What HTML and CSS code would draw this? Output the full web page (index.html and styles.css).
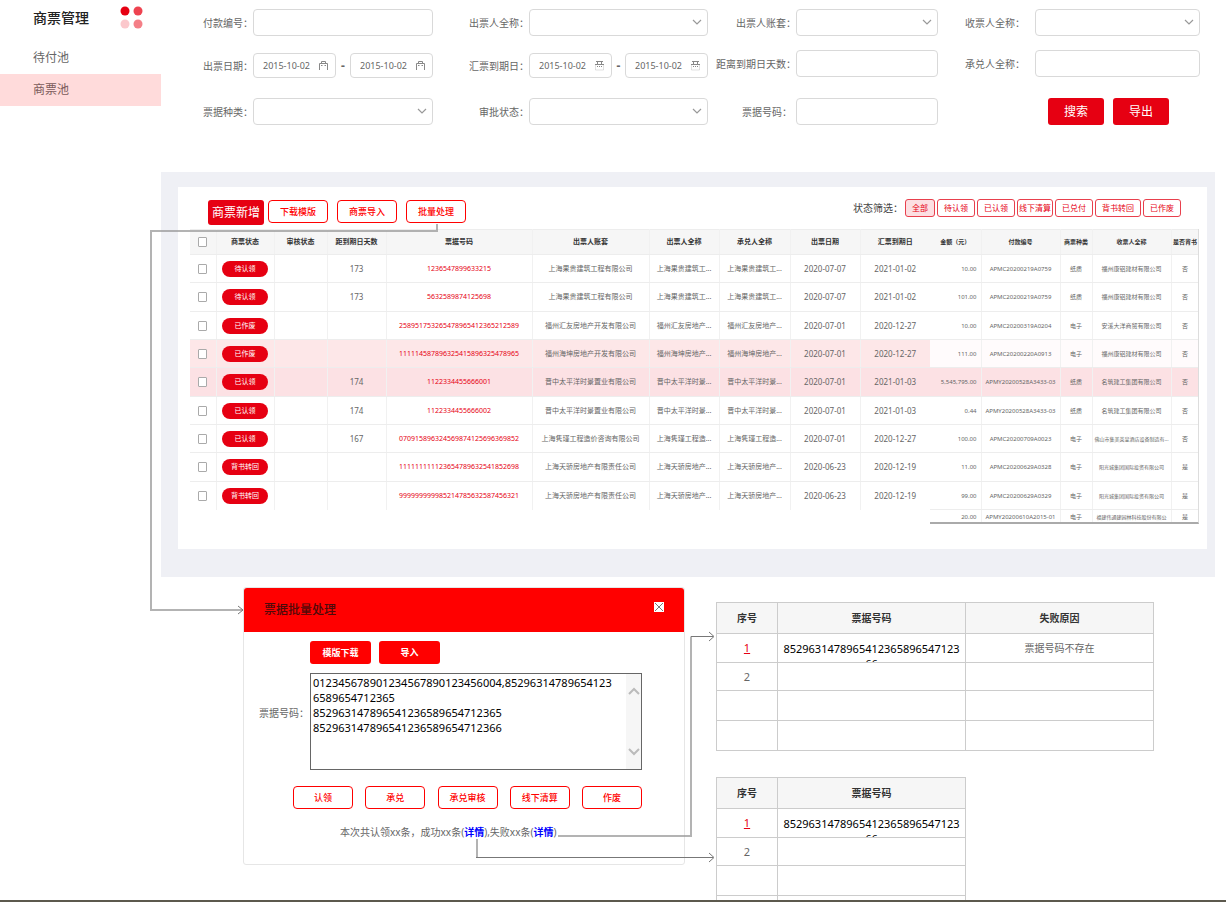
FILE: index.html
```html
<!DOCTYPE html>
<html lang="zh-CN">
<head>
<meta charset="utf-8">
<title>商票管理</title>
<link rel="stylesheet" href="styles.css">
</head>
<body>
<div class="page">
  <div class="top">
    <aside class="sidebar">
      <div class="brand">
        <h1>商票管理</h1>
        <svg class="dots" width="24" height="24" viewBox="0 0 24 24" aria-hidden="true"><circle cx="5" cy="5" r="4.5" fill="#e60012"/><circle cx="18" cy="5" r="4.5" fill="#ee4350"/><circle cx="5" cy="18" r="4.5" fill="#fbc8cc"/><circle cx="18" cy="18" r="4.5" fill="#f47f87"/></svg>
      </div>
      <nav class="nav">
        <a href="#pending">待付池</a>
        <a href="#pool" class="active">商票池</a>
      </nav>
    </aside>
    <form class="search">
      <label for="f1">付款编号：</label>
      <input id="f1" class="box" type="text">
      <label for="f2">出票人全称：</label>
      <div class="pick"><select id="f2" class="box"><option></option></select><svg class="chev" viewBox="0 0 10 6"><path d="M1 1l4 4 4-4"/></svg></div>
      <label for="f3">出票人账套：</label>
      <div class="pick"><select id="f3" class="box"><option></option></select><svg class="chev" viewBox="0 0 10 6"><path d="M1 1l4 4 4-4"/></svg></div>
      <label for="f4" class="wide">收票人全称：</label>
      <div class="pick"><select id="f4" class="box"><option></option></select><svg class="chev" viewBox="0 0 10 6"><path d="M1 1l4 4 4-4"/></svg></div>

      <label for="f5" class="low">出票日期：</label>
      <div class="range">
        <span class="date"><input id="f5" type="text" value="2015-10-02"><svg viewBox="0 0 9 10"><path d="M.5 9V2.500h8V9M2.500 2.500v-2h4v2M2 4.500h1.500M5.500 4.500H7"/></svg></span>
        <b>-</b>
        <span class="date"><input type="text" value="2015-10-02" aria-label="出票日期止"><svg viewBox="0 0 9 10"><path d="M.5 9V2.500h8V9M2.500 2.500v-2h4v2M2 4.500h1.500M5.500 4.500H7"/></svg></span>
      </div>
      <label for="f6" class="low">汇票到期日：</label>
      <div class="range">
        <span class="date"><input id="f6" type="text" value="2015-10-02"><svg viewBox="0 0 9 10"><path d="M1 .5h7M0 3.500h9M2.500 .5v3M6.500 .5v3M2 5.500h1M4 5.500h1M6 5.500h1"/><path d="M.5 4v5h8V4" opacity=".25"/></svg></span>
        <b>-</b>
        <span class="date"><input type="text" value="2015-10-02" aria-label="汇票到期日止"><svg viewBox="0 0 9 10"><path d="M1 .5h7M0 3.500h9M2.500 .5v3M6.500 .5v3M2 5.500h1M4 5.500h1M6 5.500h1"/><path d="M.5 4v5h8V4" opacity=".25"/></svg></span>
      </div>
      <label for="f7">距离到期日天数：</label>
      <input id="f7" class="box" type="text">
      <label for="f8" class="wide">承兑人全称：</label>
      <input id="f8" class="box" type="text">

      <label for="f9">票据种类：</label>
      <div class="pick"><select id="f9" class="box"><option></option></select><svg class="chev" viewBox="0 0 10 6"><path d="M1 1l4 4 4-4"/></svg></div>
      <label for="f10">审批状态：</label>
      <div class="pick"><select id="f10" class="box"><option></option></select><svg class="chev" viewBox="0 0 10 6"><path d="M1 1l4 4 4-4"/></svg></div>
      <label for="f11" class="mid">票据号码：</label>
      <input id="f11" class="box" type="text">
      <div class="actions">
        <button type="button">搜索</button>
        <button type="button">导出</button>
      </div>
    </form>
  </div>

  <main class="panel">
    <section class="card">
      <div class="toolbar">
        <button type="button" class="add">商票新增</button>
        <button type="button" class="line">下载模版</button>
        <button type="button" class="line">商票导入</button>
        <button type="button" class="line">批量处理</button>
        <div class="filters">
          <span>状态筛选：</span>
          <button type="button" class="on">全部</button>
          <button type="button">待认领</button>
          <button type="button">已认领</button>
          <button type="button">线下清算</button>
          <button type="button">已兑付</button>
          <button type="button">背书转回</button>
          <button type="button">已作废</button>
        </div>
      </div>
      <div class="grids">
        <table class="grid main-grid">
          <colgroup><col class="w26"><col class="w58"><col class="w53"><col class="w59"><col class="w146"><col class="w117"><col class="w70"><col class="w71"><col class="w70"><col class="w70"></colgroup>
          <thead><tr><th><input type="checkbox" aria-label="全选"></th><th>商票状态</th><th>审核状态</th><th>距到期日天数</th><th>票据号码</th><th>出票人账套</th><th>出票人全称</th><th>承兑人全称</th><th>出票日期</th><th>汇票到期日</th></tr></thead>
          <tbody>
            <tr><td><input type="checkbox" aria-label="选择"></td><td><span class="pill">待认领</span></td><td></td><td>173</td><td class="no">1236547899633215</td><td class="name">上海果贵建筑工程有限公司</td><td class="name">上海果贵建筑工...</td><td class="name">上海果贵建筑工...</td><td>2020-07-07</td><td>2021-01-02</td></tr>
            <tr><td><input type="checkbox" aria-label="选择"></td><td><span class="pill">待认领</span></td><td></td><td>173</td><td class="no">5632589874125698</td><td class="name">上海果贵建筑工程有限公司</td><td class="name">上海果贵建筑工...</td><td class="name">上海果贵建筑工...</td><td>2020-07-07</td><td>2021-01-02</td></tr>
            <tr><td><input type="checkbox" aria-label="选择"></td><td><span class="pill">已作废</span></td><td></td><td></td><td class="no">258951753265478965412365212589</td><td class="name">福州汇友房地产开发有限公司</td><td class="name">福州汇友房地产...</td><td class="name">福州汇友房地产...</td><td>2020-07-01</td><td>2020-12-27</td></tr>
            <tr class="pink"><td><input type="checkbox" aria-label="选择"></td><td><span class="pill">已作废</span></td><td></td><td></td><td class="no">111114587896325415896325478965</td><td class="name">福州海坤房地产开发有限公司</td><td class="name">福州海坤房地产...</td><td class="name">福州海坤房地产...</td><td>2020-07-01</td><td>2020-12-27</td></tr>
            <tr class="rose"><td><input type="checkbox" aria-label="选择"></td><td><span class="pill">已认领</span></td><td></td><td>174</td><td class="no">1122334455666001</td><td class="name">晋中太平洋时景置业有限公司</td><td class="name">晋中太平洋时景...</td><td class="name">晋中太平洋时景...</td><td>2020-07-01</td><td>2021-01-03</td></tr>
            <tr><td><input type="checkbox" aria-label="选择"></td><td><span class="pill">已认领</span></td><td></td><td>174</td><td class="no">1122334455666002</td><td class="name">晋中太平洋时景置业有限公司</td><td class="name">晋中太平洋时景...</td><td class="name">晋中太平洋时景...</td><td>2020-07-01</td><td>2021-01-03</td></tr>
            <tr><td><input type="checkbox" aria-label="选择"></td><td><span class="pill">已认领</span></td><td></td><td>167</td><td class="no">070915896324569874125696369852</td><td class="name">上海隽瑾工程造价咨询有限公司</td><td class="name">上海隽瑾工程造...</td><td class="name">上海隽瑾工程造...</td><td>2020-07-01</td><td>2020-12-27</td></tr>
            <tr><td><input type="checkbox" aria-label="选择"></td><td><span class="pill">背书转回</span></td><td></td><td></td><td class="no">111111111123654789632541852698</td><td class="name">上海天骄房地产有限责任公司</td><td class="name">上海天骄房地产...</td><td class="name">上海天骄房地产...</td><td>2020-06-23</td><td>2020-12-19</td></tr>
            <tr><td><input type="checkbox" aria-label="选择"></td><td><span class="pill">背书转回</span></td><td></td><td></td><td class="no">999999999985214785632587456321</td><td class="name">上海天骄房地产有限责任公司</td><td class="name">上海天骄房地产...</td><td class="name">上海天骄房地产...</td><td>2020-06-23</td><td>2020-12-19</td></tr>
          </tbody>
        </table>
        <div class="side">
          <table class="grid side-grid">
            <colgroup><col class="w51"><col class="w79"><col class="w32"><col class="w79"><col class="w28"></colgroup>
            <thead><tr><th>金额（元）</th><th>付款编号</th><th>商票种类</th><th>收票人全称</th><th>是否背书</th></tr></thead>
            <tbody>
              <tr><td class="num">10.00</td><td>APMC20200219A0759</td><td>纸质</td><td>福州康铝建材有限公司</td><td>否</td></tr>
              <tr><td class="num">101.00</td><td>APMC20200219A0759</td><td>纸质</td><td>福州康铝建材有限公司</td><td>否</td></tr>
              <tr><td class="num">10.00</td><td>APMC20200319A0204</td><td>电子</td><td>安溪大洋商贸有限公司</td><td>否</td></tr>
              <tr class="faint"><td class="num">111.00</td><td>APMC20200220A0913</td><td>电子</td><td>福州康铝建材有限公司</td><td>否</td></tr>
              <tr class="rose"><td class="num">5,545,795.00</td><td>APMY20200528A3433-03</td><td>纸质</td><td>名筑建工集团有限公司</td><td>否</td></tr>
              <tr><td class="num">0.44</td><td>APMY20200528A3433-03</td><td>纸质</td><td>名筑建工集团有限公司</td><td>否</td></tr>
              <tr><td class="num">100.00</td><td>APMC20200709A0023</td><td>电子</td><td class="long">佛山市集美英皇酒店设备制造有...</td><td>否</td></tr>
              <tr><td class="num">11.00</td><td>APMC20200629A0328</td><td>电子</td><td class="long">阳光城集团国际投资有限公司</td><td>是</td></tr>
              <tr><td class="num">99.00</td><td>APMC20200629A0329</td><td>电子</td><td class="long">阳光城集团国际投资有限公司</td><td>是</td></tr>
              <tr class="last"><td class="num">20.00</td><td>APMY20200610A2015-01</td><td>电子</td><td class="long">福建伟通建园林科技股份有限公</td><td>是</td></tr>
            </tbody>
          </table>
        </div>
      </div>
    </section>
  </main>

  <div class="stage">
    <section class="dialog" aria-label="票据批量处理">
      <header>
        <h2>票据批量处理</h2>
        <button type="button" class="close" aria-label="关闭"><svg width="10" height="10" viewBox="0 0 10 10"><path d="M1 1l8 8M9 1l-8 8"/></svg></button>
      </header>
      <div class="upload">
        <button type="button">模版下载</button>
        <button type="button">导入</button>
      </div>
      <div class="entry">
        <label for="codes">票据号码：</label>
        <div class="area">
          <textarea id="codes">012345678901234567890123456004,85296314789654123
6589654712365
852963147896541236589654712365
852963147896541236589654712366</textarea>
          <div class="bar"><svg viewBox="0 0 12 8"><path d="M1 7l5-5 5 5"/></svg><svg viewBox="0 0 12 8"><path d="M1 1l5 5 5-5"/></svg></div>
        </div>
      </div>
      <div class="ops">
        <button type="button">认领</button>
        <button type="button">承兑</button>
        <button type="button">承兑审核</button>
        <button type="button">线下清算</button>
        <button type="button">作废</button>
      </div>
      <p class="result">本次共认领xx条，成功xx条(<a href="#ok">详情</a>),失败xx条(<a href="#fail">详情</a>)</p>
    </section>

    <div class="details">
      <table class="detail">
        <colgroup><col class="w61"><col class="w188"><col class="w188"></colgroup>
        <thead><tr><th>序号</th><th>票据号码</th><th>失败原因</th></tr></thead>
        <tbody>
          <tr><td><a href="#r1">1</a></td><td><div class="code">8529631478965412365896547123<br>66</div></td><td>票据号码不存在</td></tr>
          <tr><td>2</td><td></td><td></td></tr>
          <tr><td></td><td></td><td></td></tr>
          <tr><td></td><td></td><td></td></tr>
        </tbody>
      </table>
      <table class="detail short">
        <colgroup><col class="w61"><col class="w188"></colgroup>
        <thead><tr><th>序号</th><th>票据号码</th></tr></thead>
        <tbody>
          <tr><td><a href="#r1">1</a></td><td><div class="code">8529631478965412365896547123<br>66</div></td></tr>
          <tr><td>2</td><td></td></tr>
          <tr><td></td><td></td></tr>
          <tr><td></td><td></td></tr>
        </tbody>
      </table>
    </div>
  </div>
  <div class="edge"></div>

  <svg class="wires" width="1226" height="902" viewBox="0 0 1226 902" aria-hidden="true">
    <path class="soft" d="M437 224v7H151v379H243"/>
    <path d="M238 606l5 4-5 4"/>
    <path class="soft" d="M558 836H691V636.500"/>
    <path d="M709 632l5 4.500-5 4.500M691 636.500h22"/>
    <path class="soft" d="M477 839v18.500"/>
    <path d="M709 853l5 4.500-5 4.500M476 857.500h237"/>
  </svg>
</div>
</body>
</html>
```

FILE: styles.css
```css
* { box-sizing: border-box; }
body {
  margin: 0;
  background: #fff;
  color: #666;
  font: 10px/14px "Noto Sans", "Noto Sans CJK SC", sans-serif;
}
button, input, select, textarea { font: inherit; color: inherit; }
button { padding: 0; white-space: nowrap; cursor: pointer; }
h1, h2, p { margin: 0; }

.page {
  position: relative;
  display: flex;
  flex-direction: column;
  height: 100vh;
  overflow: hidden;
}
.wires { position: absolute; left: 0; top: 0; pointer-events: none; fill: none; stroke: #777; }
.wires .soft { stroke: #999; stroke-width: 2; opacity: .75; }

/* top area */
.top { display: flex; flex: none; height: 172px; }
.sidebar { width: 161px; flex: none; }
.brand { display: flex; justify-content: space-between; height: 42px; padding: 6px 17px 0 33px; }
.brand h1 { font-size: 14px; line-height: 24px; font-weight: 500; color: #222; }
.nav a {
  display: block;
  padding-left: 33px;
  font-size: 12px;
  line-height: 32px;
  color: #666;
  text-decoration: none;
}
.nav .active { background: #ffdbdb; color: #7b5a5a; }

.search {
  flex: 1;
  display: grid;
  grid-template-columns: 92px minmax(0, 180fr) 96px minmax(0, 179fr) 88px minmax(0, 142fr) 97px minmax(0, 165fr);
  grid-template-rows: 27px 34px 27px;
  row-gap: 14px;
  padding: 9px 26px 0 0;
  align-items: start;
}
.search label { text-align: right; line-height: 28px; white-space: nowrap; }
.search .low { line-height: 32px; }
.search .wide { padding-right: 10px; }
.search .mid { padding-right: 4px; }
.box {
  display: block;
  width: 100%;
  height: 27px;
  border: 1px solid #d9d9d9;
  border-radius: 4px;
  background: #fff;
  padding: 0 8px;
  appearance: none;
}
.pick { position: relative; }
.chev { position: absolute; right: 6px; top: 10px; width: 10px; height: 6px; fill: none; stroke: #999; stroke-width: 1.2; pointer-events: none; }
.range { display: flex; justify-content: space-between; align-items: center; padding-top: 3px; }
.range b { font-size: 12px; }
.date {
  display: flex;
  align-items: center;
  width: 83px;
  height: 25px;
  padding: 0 7px 0 9px;
  border: 1px solid #d9d9d9;
  border-radius: 4px;
}
.date input { flex: 1; width: 0; border: 0; padding: 0; font-size: 9px; background: none; }
.date svg { width: 9px; height: 10px; fill: none; stroke: #888; }
.actions { grid-column: 8; display: flex; gap: 9px; padding-left: 13px; }
.actions button {
  width: 56px;
  height: 27px;
  border: 0;
  border-radius: 3px;
  background: #e60012;
  color: #fff;
  font-size: 12px;
}

/* list panel */
.panel { flex: none; margin: 0 11px 0 161px; padding: 15px 8px 28px 17px; background: #eff0f5; }
.card { height: 362px; background: #fff; padding: 12px 8px 0 12px; }
.toolbar { display: flex; align-items: flex-start; height: 30px; padding: 1px 18px 0; }
.toolbar .add { width: 56px; height: 25px; margin-right: 4px; border: 0; border-radius: 3px; background: #e60012; color: #fff; font-size: 12px; }
.line, .ops button {
  width: 60px;
  height: 23px;
  border: 1px solid #f00;
  border-radius: 4px;
  background: #fff;
  color: #f00;
  font-size: 9px;
  font-weight: 500;
}
.line { margin-right: 9px; }
.filters { display: flex; align-items: center; gap: 2px; margin-left: auto; height: 16px; color: #444; }
.filters button {
  height: 18px;
  padding: 0 6px;
  border: 1px solid #e8404d;
  border-radius: 3px;
  background: #fff;
  color: #e60012;
  font-size: 8px;
}
.filters button:nth-of-type(4) { padding: 0 1px; }
.filters .on { background: #fcdfe2; }

.grids { display: flex; align-items: flex-start; }
.grid, .detail { border-collapse: collapse; table-layout: fixed; }
.grid { font-size: 8px; line-height: 12px; }
.grid th, .grid td {
  padding: 0;
  height: 28px;
  text-align: center;
  white-space: nowrap;
  border-right: 1px solid #f1f1f1;
  border-bottom: 1px solid #ededed;
}
.grid th { height: 25px; background: #f6f6f6; color: #333; font-size: 7px; font-weight: 700; border-top: 1px solid #ededed; }
.grid tbody tr:nth-child(3n+2) td { height: 29px; }
.main-grid { flex: 740 1 0; width: 0; }
.main-grid tr > :last-child { border-right: 0; }
.main-grid tbody tr:last-child td { border-bottom: 0; }
.main-grid .name, .main-grid .no, .pill { font-size: 7px; }
.grid .no { color: #e60012; }
.grid input { display: block; appearance: none; width: 9px; height: 10px; margin: 0 auto; border: 1px solid #aaa; border-radius: 1px; background: #fff; }
.pill { display: block; width: 46px; margin: 0 auto; border-radius: 8px; background: #e60012; color: #fff; line-height: 16px; }
.grid .pink { background: #fde7e8; }
.grid .rose { background: #fce1e4; }
.grid .faint { background: #fffbfc; }
.side { flex: 269 1 0; width: 0; height: 295px; overflow: hidden; border-right: 1px solid #ddd; border-bottom: 2px solid #aaa; }
.side-grid { width: 100%; font-size: 6px; }
.side-grid th { font-size: 6px; }
.side-grid .num { text-align: right; padding-right: 4px; }
.side-grid .long { font-size: 5px; }
.side-grid .last td { vertical-align: top; padding-top: 1px; }

.w26 { width: 26px; } .w28 { width: 28px; } .w32 { width: 32px; } .w51 { width: 51px; }
.w53 { width: 53px; } .w58 { width: 58px; } .w59 { width: 59px; } .w61 { width: 61px; }
.w70 { width: 70px; } .w71 { width: 71px; } .w79 { width: 79px; } .w117 { width: 117px; }
.w146 { width: 146px; } .w188 { width: 188px; }

/* lower area */
.stage { flex: 1; min-height: 0; overflow: hidden; display: flex; align-items: flex-start; gap: 31px; padding-left: 243px; }
.dialog { width: 442px; height: 278px; margin-top: 10px; border: 1px solid #e6e6e6; border-radius: 3px; }
.dialog header { display: flex; justify-content: space-between; height: 44px; padding: 0 20px; background: #f00; border-radius: 3px 3px 0 0; }
.dialog h2 { font-size: 12px; line-height: 44px; font-weight: 500; color: #4d0a0a; }
.close { width: 10px; height: 10px; margin-top: 14px; border: 0; background: #fff; line-height: 0; }
.close svg { stroke: #555; fill: none; stroke-width: .8; }
.upload { display: flex; gap: 8px; padding: 9px 0 9px 66px; }
.upload button { width: 61px; height: 23px; border: 0; border-radius: 3px; background: #f00; color: #fff; font-size: 9px; font-weight: 700; }
.entry { display: flex; align-items: center; padding: 0 42px 0 15px; }
.entry label { width: 51px; flex: none; padding-bottom: 18px; }
.area { flex: 1; display: flex; height: 97px; border: 1px solid #666; }
.area textarea { flex: 1; width: 0; border: 0; padding: 1px 2px; resize: none; overflow: hidden; background: none; color: #000; font-size: 11px; line-height: 15px; }
.bar { display: flex; flex-direction: column; justify-content: space-between; align-items: center; width: 15px; padding: 13px 0; background: #f6f6f6; }
.bar svg { width: 12px; height: 8px; fill: none; stroke: #bbb; stroke-width: 2; }
.ops { display: flex; justify-content: space-between; padding: 16px 42px 0 49px; }
.result { margin-top: 16px; padding-left: 96px; white-space: nowrap; }
.result a { color: #00f; font-weight: 700; text-decoration: none; }

.details { display: flex; flex-direction: column; gap: 26px; margin-top: 25px; }
.detail { width: 437px; }
.detail.short { width: 249px; }
.detail th, .detail td { padding: 0; height: 29px; border: 1px solid #ccc; text-align: center; }
.detail th { height: 31px; background: #f6f6f6; color: #333; font-weight: 700; }
.detail tr:nth-child(2) td { height: 28px; }
.detail tr:nth-child(n+3) td { height: 30px; }
.detail td:first-child { font-size: 11px; }
.detail a { color: #e60012; }
.code { height: 28px; padding-top: 7px; overflow: hidden; color: #000; font-size: 11px; line-height: 15px; }
.edge { flex: none; height: 2px; background: #5c594e; }
```
